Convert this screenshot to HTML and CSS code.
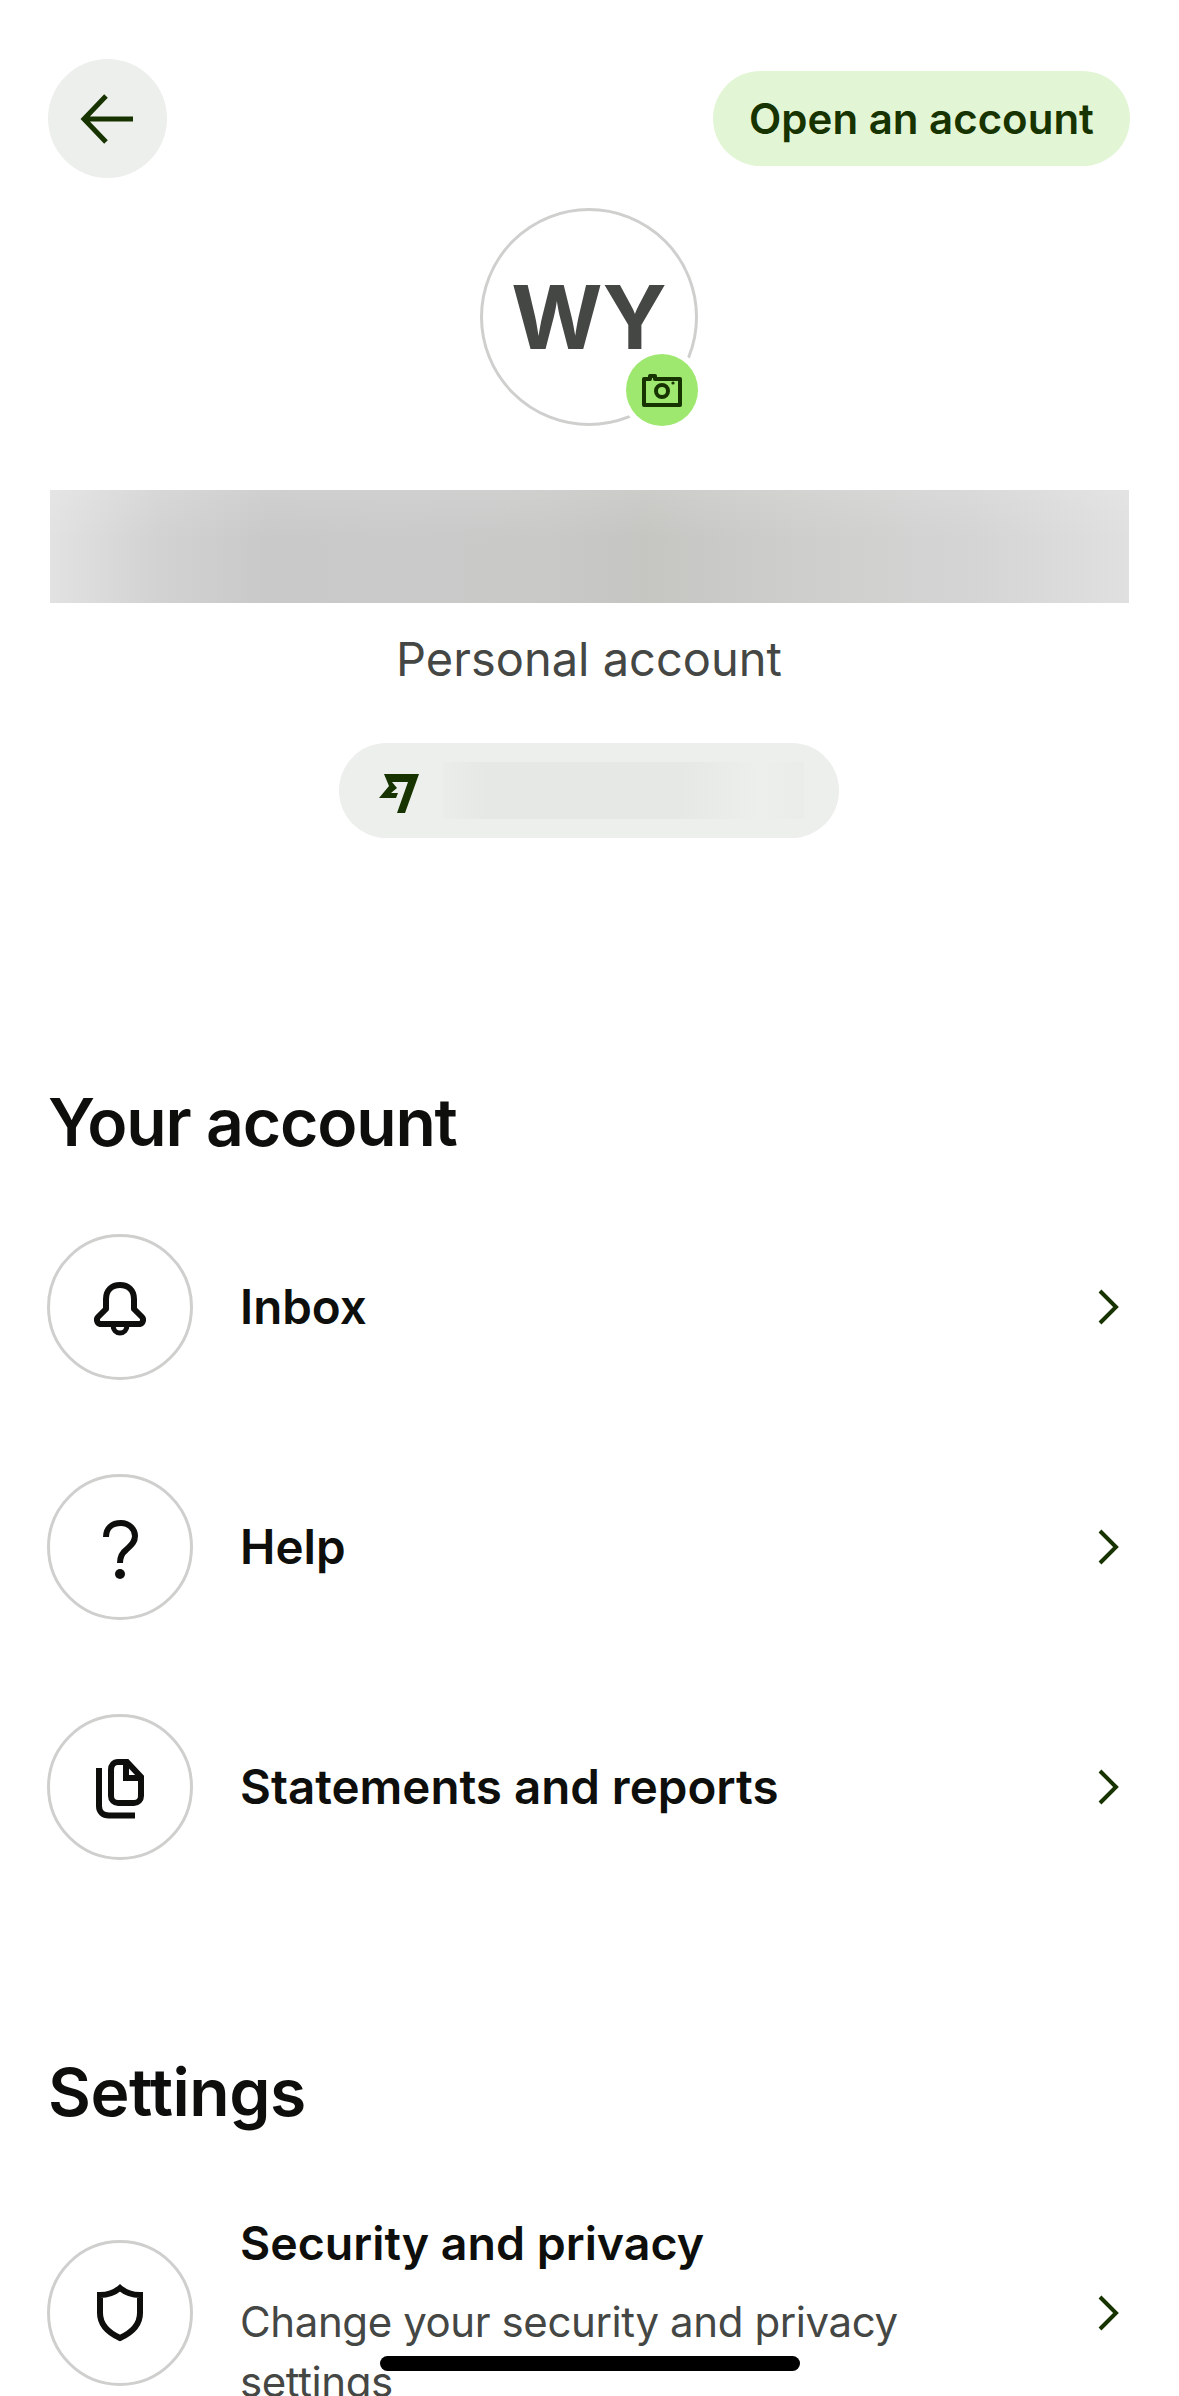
FILE: index.html
```html
<!DOCTYPE html>
<html>
<head>
  <meta charset="utf-8">
  <title>Your account</title>
  <link rel="stylesheet" href="styles.css">
</head>
<body>
  <div class="page">
    <div class="topbar">
      <button class="back-btn">
        <svg width="56" height="56" viewBox="0 0 56 56" fill="none" stroke="#163300" stroke-width="5">
          <path d="M53 28H5M26 5L4 28l22 23"/>
        </svg>
      </button>
      <button class="open-btn">Open an account</button>
    </div>

    <div class="profile">
      <div class="avatar">
        <span class="initials">WY</span>
        <span class="camera">
          <svg width="40" height="34" viewBox="0 0 40 34" fill="none" stroke="#163300" stroke-width="4">
            <path d="M2 31V6h6V3h5v3h25v26H2z" stroke-linejoin="round"/>
            <circle cx="20" cy="18" r="6"/>
            <circle cx="31" cy="10" r="1.6" fill="#163300" stroke="none"/>
          </svg>
        </span>
      </div>
      <div class="name-blur"></div>
      <div class="account-type">Personal account</div>
      <div class="tag-chip">
        <svg class="wise-logo" width="60" height="60" viewBox="0 0 60 60">
          <path fill="#163300" d="M15 13H50L36 52H28L39 21H23L28 27 22 32H29L27 37H10L20 25Z"/>
        </svg>
        <div class="tag-blur"></div>
      </div>
    </div>

    <h2 class="section-title first">Your account</h2>
    <div class="list">
      <div class="row">
        <span class="row-icon">
          <svg width="80" height="80" viewBox="0 0 80 80" fill="none" stroke="#0e0f0c" stroke-width="6" stroke-linejoin="round">
            <path d="M26 42V32C26 23 32 18 40 18S54 23 54 32V42L62 50C64 52 63 56.500 60 57H20C17 56.500 16 52 18 50Z"/>
            <path stroke-width="5" d="M33 58C33 63 36 66 40 66S47 63 47 58"/>
          </svg>
        </span>
        <span class="row-label">Inbox</span>
        <svg class="chevron" width="24" height="38" viewBox="0 0 24 38" fill="none" stroke="#163300" stroke-width="4"><path d="M3 3L19 19L3 35"/></svg>
      </div>
      <div class="row">
        <span class="row-icon">
          <svg width="80" height="80" viewBox="0 0 80 80" fill="none" stroke="#0e0f0c" stroke-width="6">
            <path d="M26 30C26 21 32 16 41 16C49 16 55 22 55 29C55 36 50 39 46 43C42 46 40 50 40 56"/>
            <circle cx="40" cy="67" r="5" fill="#0e0f0c" stroke="none"/>
          </svg>
        </span>
        <span class="row-label">Help</span>
        <svg class="chevron" width="24" height="38" viewBox="0 0 24 38" fill="none" stroke="#163300" stroke-width="4"><path d="M3 3L19 19L3 35"/></svg>
      </div>
      <div class="row">
        <span class="row-icon">
          <svg width="80" height="80" viewBox="0 0 80 80" fill="none" stroke="#0e0f0c" stroke-width="6">
            <path d="M19 21V59C19 65 23 68.500 29 68.500H55"/>
            <path d="M31 23C31 18 34 15 38 15H47L61 30V49C61 53 58 56 54 56H38C34 56 31 53 31 49Z"/>
            <path d="M46 15V31H61"/>
          </svg>
        </span>
        <span class="row-label">Statements and reports</span>
        <svg class="chevron" width="24" height="38" viewBox="0 0 24 38" fill="none" stroke="#163300" stroke-width="4"><path d="M3 3L19 19L3 35"/></svg>
      </div>
    </div>

    <h2 class="section-title second">Settings</h2>
    <div class="row row-tall">
      <span class="row-icon">
        <svg width="80" height="80" viewBox="0 0 80 80" fill="none" stroke="#0e0f0c" stroke-width="6">
          <path d="M40 15C34 20 28 22 20 22V40C20 52 29 60 40 65C51 60 60 52 60 40V22C52 22 46 20 40 15Z"/>
        </svg>
      </span>
      <div class="row-text">
        <span class="row-label">Security and privacy</span>
        <span class="row-sub">Change your security and privacy settings</span>
      </div>
      <svg class="chevron" width="24" height="38" viewBox="0 0 24 38" fill="none" stroke="#163300" stroke-width="4"><path d="M3 3L19 19L3 35"/></svg>
    </div>
  </div>
  <div class="home-bar"></div>
</body>
</html>
```
FILE: styles.css
```css
* {
    padding: 0px;
    margin: 0px;
    box-sizing: border-box;
}

html, body {
    height: 2396px;
    overflow: hidden;
    background-color: #fff;
}

body {
    font-family: Inter, "Liberation Sans", sans-serif;
    color: #0e0f0c;
    position: relative;
}

.page {
    padding: 59px 49px 0 48px;
}

.topbar {
    display: flex;
    justify-content: space-between;
    align-items: center;
    height: 119px;
}

.back-btn {
    width: 119px;
    height: 119px;
    border: none;
    border-radius: 50%;
    background-color: #edefec;
    display: flex;
    align-items: center;
    justify-content: center;
}

.open-btn {
    width: 417px;
    height: 95px;
    border: none;
    border-radius: 48px;
    background-color: #e2f6d5;
    color: #163300;
    font-family: inherit;
    font-size: 42px;
    font-weight: 600;
}

.profile {
    display: flex;
    flex-direction: column;
    align-items: center;
    padding-top: 30px;
}

.avatar {
    position: relative;
    width: 218px;
    height: 218px;
    border: 3px solid #cfd0ce;
    border-radius: 50%;
    display: flex;
    align-items: center;
    justify-content: center;
}

.initials {
    font-size: 88px;
    font-weight: 700;
    color: #454745;
}

.camera {
    position: absolute;
    right: -3px;
    bottom: -3px;
    width: 72px;
    height: 72px;
    border-radius: 50%;
    background-color: #9fe870;
    box-shadow: 0 0 0 6px #fff;
    display: flex;
    align-items: center;
    justify-content: center;
}

.name-blur {
    width: 1079px;
    height: 113px;
    margin-top: 64px;
    background:
        linear-gradient(180deg, rgba(255,255,255,.12) 0, rgba(255,255,255,0) 45%),
        linear-gradient(90deg, #e2e2e2 0, #d2d2d2 10%, #c9c9c9 20%, #c9cac8 45%, #c5c6c2 55%, #cecfcc 70%, #d4d4d4 85%, #e0e0e0 100%);
}

.account-type {
    margin-top: 27px;
    font-size: 47px;
    line-height: 58px;
    color: #454745;
}

.tag-chip {
    width: 500px;
    height: 95px;
    margin-top: 55px;
    border-radius: 48px;
    background-color: #edefec;
    display: flex;
    align-items: center;
    padding-left: 30px;
    gap: 14px;
}

.tag-blur {
    width: 361px;
    height: 57px;
    background: linear-gradient(90deg, #ebedea 0, #e6e8e5 12%, #e6e8e5 65%, #edefec 88%, #eaece9 100%);
}

.section-title {
    font-size: 66px;
    font-weight: 600;
    line-height: 80px;
    letter-spacing: -0.5px;
}

.section-title.first {
    margin-top: 244px;
    letter-spacing: -1.2px;
}

.section-title.second {
    margin-top: 192px;
}

.list {
    display: flex;
    flex-direction: column;
    gap: 94px;
    margin-top: 72px;
}

.row {
    display: flex;
    align-items: center;
    height: 146px;
}

.row-icon {
    flex: none;
    width: 146px;
    height: 146px;
    margin-left: -1px;
    border: 3px solid #cfd0ce;
    border-radius: 50%;
    display: flex;
    align-items: center;
    justify-content: center;
}

.row-label {
    margin-left: 47px;
    font-size: 47.5px;
    font-weight: 600;
    line-height: 58px;
}

.chevron {
    margin-left: auto;
    margin-right: 9px;
    flex: none;
}

.row-tall {
    margin-top: 82px;
    height: auto;
    align-items: center;
}

.row-text {
    display: flex;
    flex-direction: column;
    width: 800px;
    margin-left: 47px;
}

.row-text .row-label {
    margin-left: 0;
    font-size: 46.5px;
}

.row-sub {
    margin-top: 20px;
    font-size: 42px;
    letter-spacing: -0.4px;
    line-height: 60px;
    color: #454745;
}

.home-bar {
    position: absolute;
    left: 380px;
    top: 2356px;
    width: 420px;
    height: 15px;
    border-radius: 8px;
    background-color: #000;
}
```
